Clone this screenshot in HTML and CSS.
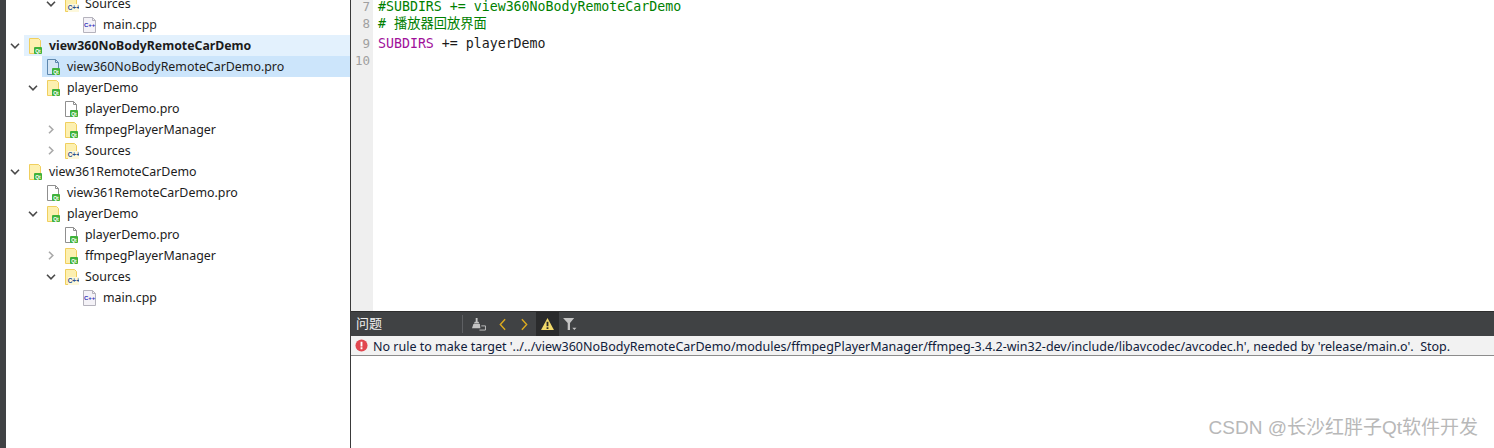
FILE: index.html
```html
<!DOCTYPE html>
<html lang="zh">
<head>
<meta charset="utf-8">
<title>Qt Creator</title>
<link rel="stylesheet" href="styles.css">
</head>
<body>
<svg class="defs" width="0" height="0">
  <defs>
    <symbol id="folder" viewBox="0 0 14 16">
      <path d="M.5.5h9l2 2v13H.5z" fill="#fdf0b0" stroke="#f0cf5e"/>
    </symbol>
    <symbol id="qtbadge" viewBox="0 0 8 7">
      <rect width="8" height="7" rx="1" fill="#3fb23a"/>
      <text x="4" y="5.5" class="badge-text">Qt</text>
    </symbol>
    <symbol id="profile" viewBox="0 0 14 16">
      <path d="M.5.5h8l3 3v12H.5z" fill="#fff" stroke="#8f8f8f"/>
      <path d="M8.5.5v3h3" fill="none" stroke="#8f8f8f"/>
    </symbol>
    <symbol id="profile-sel" viewBox="0 0 14 16">
      <path d="M.5.5h8l3 3v12H.5z" fill="#d5e6f5" stroke="#5d87ad"/>
      <path d="M8.5.5v3h3" fill="none" stroke="#5d87ad"/>
    </symbol>
    <symbol id="cppfile" viewBox="0 0 14 16">
      <path d="M.5.5h9l3 3v12H.5z" fill="#f4f2f7" stroke="#b5b3bd"/>
      <path d="M9.5.5v3h3" fill="none" stroke="#b5b3bd"/>
      <text x="6.6" y="10.2" class="cpp-text">C++</text>
    </symbol>
    <symbol id="cppfolder" viewBox="0 0 14 16">
      <path d="M.5.5h9l2 2v13H.5z" fill="#fdf0b0" stroke="#f0cf5e"/>
      <path d="M3 8h11v8H3z" fill="#fdf8dc"/>
      <text x="8.8" y="14.4" class="cpp-folder-text">C++</text>
    </symbol>
    <symbol id="chev-down" viewBox="0 0 10 6">
      <path d="M1 .8 5 4.8 9 .8" fill="none" stroke="#4a4a4a" stroke-width="1.6"/>
    </symbol>
    <symbol id="chev-right" viewBox="0 0 6 9">
      <path d="M1 .8 4.8 4.5 1 8.2" fill="none" stroke="#a9a9a9" stroke-width="1.6"/>
    </symbol>
  </defs>
</svg>
<div class="app">
  <aside class="sidebar">
    <ul class="tree">
      <li class="row lvl2"><svg class="chev-d"><use href="#chev-down"/></svg><span class="slot"><svg class="ico"><use href="#cppfolder"/></svg></span><span>Sources</span></li>
      <li class="row lvl3"><span class="slot"><svg class="ico"><use href="#cppfile"/></svg></span><span>main.cpp</span></li>
      <li class="row lvl0 active"><svg class="chev-d"><use href="#chev-down"/></svg><span class="slot"><svg class="ico"><use href="#folder"/></svg><svg class="qt"><use href="#qtbadge"/></svg></span><span class="bold">view360NoBodyRemoteCarDemo</span></li>
      <li class="row lvl1 selected"><span class="slot"><svg class="ico"><use href="#profile-sel"/></svg><svg class="qt"><use href="#qtbadge"/></svg></span><span>view360NoBodyRemoteCarDemo.pro</span></li>
      <li class="row lvl1"><svg class="chev-d"><use href="#chev-down"/></svg><span class="slot"><svg class="ico"><use href="#folder"/></svg><svg class="qt"><use href="#qtbadge"/></svg></span><span>playerDemo</span></li>
      <li class="row lvl2"><span class="slot"><svg class="ico"><use href="#profile"/></svg><svg class="qt"><use href="#qtbadge"/></svg></span><span>playerDemo.pro</span></li>
      <li class="row lvl2"><svg class="chev-r"><use href="#chev-right"/></svg><span class="slot"><svg class="ico"><use href="#folder"/></svg><svg class="qt"><use href="#qtbadge"/></svg></span><span>ffmpegPlayerManager</span></li>
      <li class="row lvl2"><svg class="chev-r"><use href="#chev-right"/></svg><span class="slot"><svg class="ico"><use href="#cppfolder"/></svg></span><span>Sources</span></li>
      <li class="row lvl0"><svg class="chev-d"><use href="#chev-down"/></svg><span class="slot"><svg class="ico"><use href="#folder"/></svg><svg class="qt"><use href="#qtbadge"/></svg></span><span>view361RemoteCarDemo</span></li>
      <li class="row lvl1"><span class="slot"><svg class="ico"><use href="#profile"/></svg><svg class="qt"><use href="#qtbadge"/></svg></span><span>view361RemoteCarDemo.pro</span></li>
      <li class="row lvl1"><svg class="chev-d"><use href="#chev-down"/></svg><span class="slot"><svg class="ico"><use href="#folder"/></svg><svg class="qt"><use href="#qtbadge"/></svg></span><span>playerDemo</span></li>
      <li class="row lvl2"><span class="slot"><svg class="ico"><use href="#profile"/></svg><svg class="qt"><use href="#qtbadge"/></svg></span><span>playerDemo.pro</span></li>
      <li class="row lvl2"><svg class="chev-r"><use href="#chev-right"/></svg><span class="slot"><svg class="ico"><use href="#folder"/></svg><svg class="qt"><use href="#qtbadge"/></svg></span><span>ffmpegPlayerManager</span></li>
      <li class="row lvl2"><svg class="chev-d"><use href="#chev-down"/></svg><span class="slot"><svg class="ico"><use href="#cppfolder"/></svg></span><span>Sources</span></li>
      <li class="row lvl3"><span class="slot"><svg class="ico"><use href="#cppfile"/></svg></span><span>main.cpp</span></li>
    </ul>
  </aside>
  <main class="content">
    <section class="editor">
      <div class="gutter">
        <div class="ln">7</div>
        <div class="ln">8</div>
        <div class="ln">9</div>
        <div class="ln">10</div>
      </div>
      <div class="code">
        <div class="line green">#SUBDIRS += view360NoBodyRemoteCarDemo</div>
        <div class="line green"># 播放器回放界面</div>
        <div class="line"><span class="purple">SUBDIRS</span> += playerDemo</div>
        <div class="line"></div>
      </div>
    </section>
    <div class="issues-bar">
      <span class="issues-title">问题</span>
      <span class="sep"></span>
      <svg class="tb-brush" viewBox="0 0 16 14"><path d="M5 0h2v4h1l1 2H3l1-2h1zM2.500 6.500h7L10 11H1z" fill="#c4c4c4"/><path d="M11 8.500h4.500v4.500H9" fill="none" stroke="#c4c4c4"/></svg>
      <svg class="tb-arrow" viewBox="0 0 8 14"><path d="M7 1 1.500 7 7 13" fill="none" stroke="#dcaa1e" stroke-width="1.6"/></svg>
      <svg class="tb-arrow" viewBox="0 0 8 14"><path d="M1 1 6.500 7 1 13" fill="none" stroke="#dcaa1e" stroke-width="1.6"/></svg>
      <span class="warn-btn"><svg class="tb-warn" viewBox="0 0 14 13"><path d="M7 0 14 13H0z" fill="#f3da6a"/><path d="M6 4h2v5H6zM6 10h2v2H6z" fill="#2e2c24"/></svg></span>
      <svg class="tb-filter" viewBox="0 0 15 13"><path d="M0 0h12L7.500 5.500V13H5V5.500z" fill="#c4c4c4"/><path d="M10 10.500h4.500L12.200 13z" fill="#c4c4c4"/></svg>
    </div>
    <div class="issue-row">
      <svg class="err" viewBox="0 0 14 14"><circle cx="7" cy="7" r="6.500" fill="#e2474f"/><path d="M6 3h2v5H6zM6 9h2v2H6z" fill="#fff"/></svg>
      <span class="issue-text">No rule to make target '../../view360NoBodyRemoteCarDemo/modules/ffmpegPlayerManager/ffmpeg-3.4.2-win32-dev/include/libavcodec/avcodec.h', needed by 'release/main.o'.  Stop.</span>
    </div>
    <div class="blank"></div>
  </main>
</div>
<div class="watermark">CSDN @长沙红胖子Qt软件开发</div>
</body>
</html>
```
FILE: styles.css
```css
* { box-sizing: border-box; }
html, body { margin: 0; height: 100%; overflow: hidden; background: #fff; }
body { font-family: "Noto Sans", "Noto Sans CJK SC", sans-serif; color: #1c1c1c; }
.defs { display: block; height: 0; }

.app { display: flex; height: 448px; }

.sidebar {
  width: 351px;
  flex: none;
  overflow: hidden;
  border-left: 6px solid #404244;
  border-right: 1px solid #3a3a3a;
}
.tree { list-style: none; margin: -7px 0 0; padding: 0; }
.row {
  height: 21px;
  display: flex;
  align-items: center;
  font-size: 12.4px;
  white-space: nowrap;
}
.lvl0 { margin-left: 18px; }
.lvl1 { margin-left: 36px; }
.lvl2 { margin-left: 54px; }
.lvl3 { margin-left: 72px; }
.active { background: #e3f1fd; }
.selected { background: #cce5fb; }
.bold { font-weight: 700; font-size: 12.3px; }

.chev-d { width: 10px; height: 6px; flex: none; margin-left: -14px; margin-right: 4px; }
.chev-r { width: 6px; height: 9px; flex: none; margin-left: -12px; margin-right: 6px; }

.slot { position: relative; display: block; flex: none; width: 25px; height: 16px; }
.ico { position: absolute; left: 5px; top: 0; width: 14px; height: 16px; }
.qt { position: absolute; left: 10px; top: 9px; width: 8px; height: 7px; }
.badge-text { font: 700 5px "Liberation Sans", sans-serif; fill: #fff; text-anchor: middle; }
.cpp-text { font: 700 6px "Liberation Sans", sans-serif; fill: #2f2fb8; text-anchor: middle; }
.cpp-folder-text { font: 700 6.5px "Liberation Sans", sans-serif; fill: #2c4f8f; text-anchor: middle; }

.content { flex: 1; min-width: 0; display: flex; flex-direction: column; }

.editor { height: 311px; display: flex; background: #fff; overflow: hidden; }
.gutter { width: 22px; flex: none; background: #efefef; }
.ln {
  height: 18.3px;
  font: 12.5px/18.3px "DejaVu Sans Mono", monospace;
  color: #a0a0a0;
  text-align: right;
  padding-right: 3px;
}
.ln:first-child, .line:first-child { height: 15.3px; line-height: 14.3px; }
.code { padding-left: 5px; }
.line {
  height: 18.3px;
  font: 13.25px/18.3px "DejaVu Sans Mono", "Noto Sans CJK SC", monospace;
  color: #1a1a1a;
  white-space: pre;
}
.line:nth-child(3), .ln:nth-child(3) { line-height: 20.3px; }
.green { color: #008000; }
.purple { color: #a0109a; }

.issues-bar {
  height: 25px;
  background: #404244;
  border-top: 1px solid #2e2e2e;
  display: flex;
  align-items: center;
  color: #f0f0f0;
}
.issues-title { width: 111px; padding-left: 5px; font: 13px/22px "Noto Sans CJK SC", sans-serif; flex: none; margin-top: -2px; }
.sep { width: 1px; height: 18px; background: #5e6063; flex: none; }
.tb-brush { width: 15px; height: 13px; flex: none; margin-left: 8px; margin-right: 13px; }
.tb-arrow { width: 7px; height: 13px; flex: none; margin-right: 15px; }
.warn-btn { width: 23px; height: 24px; background: #2a2b2c; display: flex; align-items: center; justify-content: center; margin-left: -7px; margin-right: 4px; flex: none; }
.tb-warn { width: 13px; height: 12px; }
.tb-filter { width: 14px; height: 12px; flex: none; }

.issue-row {
  height: 20px;
  display: flex;
  align-items: center;
  padding-left: 4px;
  background: #f2f2f2;
  border-bottom: 1px solid #8c8c8c;
}
.err { width: 13px; height: 13px; flex: none; margin-right: 5px; }
.issue-text { font-size: 12.5px; white-space: pre; color: #10203a; padding-top: 2px; }
.blank { flex: 1; }

.watermark {
  position: absolute;
  right: 16px;
  top: 416px;
  font: 19px/24px "Liberation Sans", "Noto Sans CJK SC", sans-serif;
  color: #b8b8b8;
  white-space: nowrap;
}
```
